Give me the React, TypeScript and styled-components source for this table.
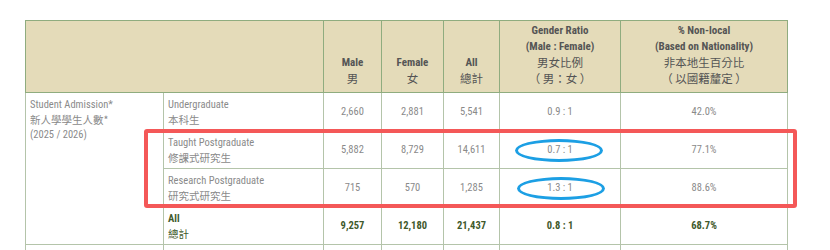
import React from "react";
import styled, { createGlobalStyle } from "styled-components";

const GlobalStyle = createGlobalStyle`
  html, body {
    margin: 0;
    padding: 0;
    background: #ffffff;
  }
  body {
    font-family: "Liberation Sans Narrow", "Roboto Condensed", Roboto, "Noto Sans CJK TC", sans-serif;
  }
`;

const Page = styled.div`
  position: relative;
  width: 830px;
  height: 250px;
  overflow: hidden;
  padding: 20px 0 0 25px;
  box-sizing: border-box;
`;

const Table = styled.table`
  width: 762px;
  border-collapse: collapse;
  table-layout: fixed;
  font-size: 10.5px;
  color: #8a8a8a;
`;

const HeadCell = styled.th`
  height: 72px;
  box-sizing: border-box;
  padding: 0 4px 5px;
  background: #e4dbb9;
  border: 1px solid #8fac7f;
  vertical-align: bottom;
  text-align: center;
  font-weight: bold;
  font-size: 11px;
  color: #555555;
`;

const Cjk = styled.span<{ $size?: number }>`
  font-family: "Noto Sans CJK TC", sans-serif;
  font-weight: normal;
  font-size: ${(p) => p.$size ?? 10.5}px;
  line-height: 15px;
`;

const Row = styled.tr<{ $h?: number }>`
  height: ${(p) => p.$h ?? 38}px;
`;

const Cell = styled.td<{ $total?: boolean; $align?: "left" | "center"; $top?: boolean }>`
  box-sizing: border-box;
  border: 1px solid #b4c4aa;
  padding: ${(p) => (p.$top ? "4px 4px 0" : "0 4px")};
  text-align: ${(p) => p.$align ?? "center"};
  vertical-align: ${(p) => (p.$top ? "top" : "middle")};
  line-height: 15px;
  font-weight: ${(p) => (p.$total ? "bold" : "normal")};
  color: ${(p) => (p.$total ? "#3f5a2c" : "#8a8a8a")};
`;

const Line = styled.div<{ $h?: number }>`
  height: ${(p) => p.$h ?? 15}px;
  line-height: ${(p) => p.$h ?? 15}px;
  white-space: nowrap;
  overflow: visible;
`;

const RedBox = styled.div`
  position: absolute;
  left: 144px;
  top: 129px;
  width: 653px;
  height: 79px;
  box-sizing: border-box;
  border: 4px solid #f45858;
  border-radius: 3px;
  pointer-events: none;
`;

const Ring = styled.div<{ $x: number; $y: number; $w: number; $h: number }>`
  position: absolute;
  left: ${(p) => p.$x}px;
  top: ${(p) => p.$y}px;
  width: ${(p) => p.$w}px;
  height: ${(p) => p.$h}px;
  box-sizing: border-box;
  border: 3px solid #1c9fe4;
  border-radius: 50%;
  pointer-events: none;
`;

const widths = [138, 160, 58, 62, 56, 121, 167];

type DataRow = {
  en: string;
  zh: string;
  male: string;
  female: string;
  all: string;
  ratio: string;
  nonLocal: string;
};

const rows: DataRow[] = [
  { en: "Undergraduate", zh: "本科生", male: "2,660", female: "2,881", all: "5,541", ratio: "0.9 : 1", nonLocal: "42.0%" },
  { en: "Taught Postgraduate", zh: "修課式研究生", male: "5,882", female: "8,729", all: "14,611", ratio: "0.7 : 1", nonLocal: "77.1%" },
  { en: "Research Postgraduate", zh: "研究式研究生", male: "715", female: "570", all: "1,285", ratio: "1.3 : 1", nonLocal: "88.6%" },
];

export default function App() {
  return (
    <>
      <GlobalStyle />
      <Page>
        <Table>
          <colgroup>
            {widths.map((w, i) => (
              <col key={i} style={{ width: w }} />
            ))}
          </colgroup>
          <thead>
            <tr>
              <HeadCell colSpan={2} />
              <HeadCell>
                <Line $h={16}>Male</Line>
                <Line $h={16}><Cjk $size={11.5}>男</Cjk></Line>
              </HeadCell>
              <HeadCell>
                <Line $h={16}>Female</Line>
                <Line $h={16}><Cjk $size={11.5}>女</Cjk></Line>
              </HeadCell>
              <HeadCell>
                <Line $h={16}>All</Line>
                <Line $h={16}><Cjk $size={11.5}>總計</Cjk></Line>
              </HeadCell>
              <HeadCell>
                <Line $h={16}>Gender Ratio</Line>
                <Line $h={16}>(Male : Female)</Line>
                <Line $h={16}><Cjk $size={11.5}>男女比例</Cjk></Line>
                <Line $h={16}><Cjk $size={11.5}>（ 男：女 ）</Cjk></Line>
              </HeadCell>
              <HeadCell>
                <Line $h={16}>% Non-local</Line>
                <Line $h={16}>(Based on Nationality)</Line>
                <Line $h={16}><Cjk $size={11.5}>非本地生百分比</Cjk></Line>
                <Line $h={16}><Cjk $size={11.5}>（ 以國籍釐定 ）</Cjk></Line>
              </HeadCell>
            </tr>
          </thead>
          <tbody>
            {rows.map((r, i) => (
              <Row key={r.en}>
                {i === 0 && (
                  <Cell rowSpan={4} $align="left" $top>
                    <Line>Student Admission*</Line>
                    <Line><Cjk>新人學學生人數*</Cjk></Line>
                    <Line>(2025 / 2026)</Line>
                  </Cell>
                )}
                <Cell $align="left">
                  <Line>{r.en}</Line>
                  <Line><Cjk>{r.zh}</Cjk></Line>
                </Cell>
                <Cell>{r.male}</Cell>
                <Cell>{r.female}</Cell>
                <Cell>{r.all}</Cell>
                <Cell>{r.ratio}</Cell>
                <Cell>{r.nonLocal}</Cell>
              </Row>
            ))}
            <Row>
              <Cell $align="left" $total>
                <Line>All</Line>
                <Line><Cjk>總計</Cjk></Line>
              </Cell>
              <Cell $total>9,257</Cell>
              <Cell $total>12,180</Cell>
              <Cell $total>21,437</Cell>
              <Cell $total>0.8 : 1</Cell>
              <Cell $total>68.7%</Cell>
            </Row>
            <Row $h={30}>
              <Cell />
              <Cell />
              <Cell />
              <Cell />
              <Cell />
              <Cell />
              <Cell />
            </Row>
          </tbody>
        </Table>
        <RedBox />
        <Ring $x={515} $y={139} $w={88} $h={23} />
        <Ring $x={517} $y={177} $w={88} $h={23} />
      </Page>
    </>
  );
}
